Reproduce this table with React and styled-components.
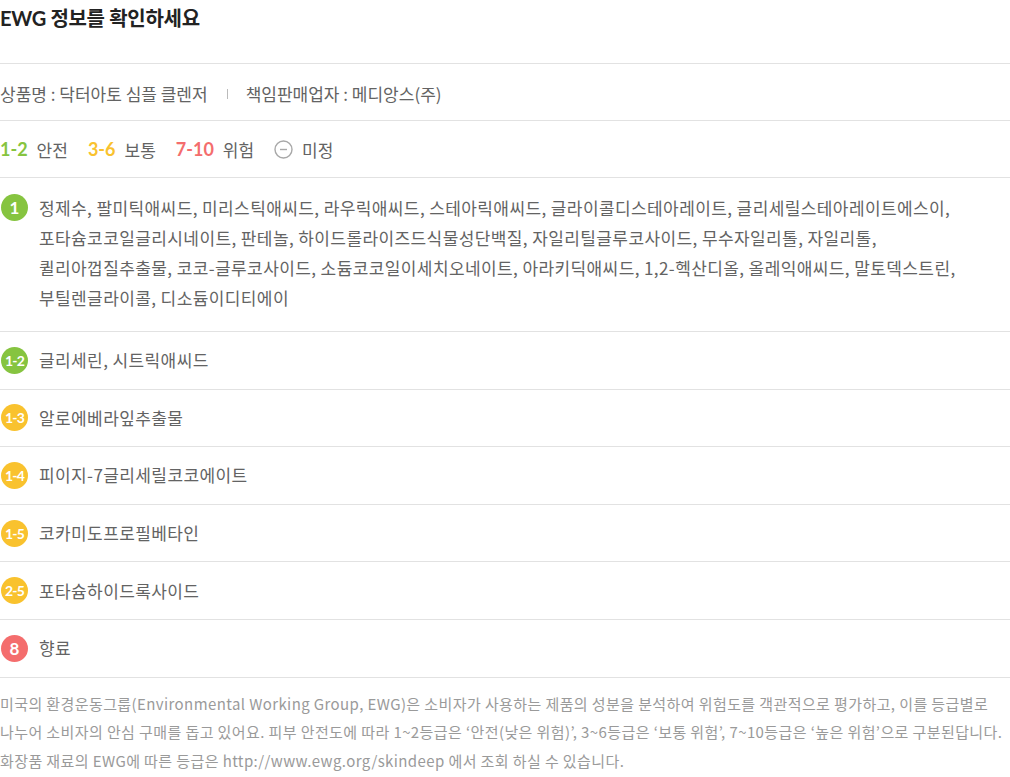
import styled, { createGlobalStyle } from 'styled-components';

const GlobalStyle = createGlobalStyle`
  body {
    margin: 0;
    background: #fff;
    font-family: "Noto Sans CJK KR", "Noto Sans", sans-serif;
  }
`;

const COLORS = {
  green: '#86c440',
  yellow: '#f9c22e',
  red: '#f46d6d',
};

const ingredients = [
  {
    grade: '1',
    color: 'green',
    lines: [
      '정제수, 팔미틱애씨드, 미리스틱애씨드, 라우릭애씨드, 스테아릭애씨드, 글라이콜디스테아레이트, 글리세릴스테아레이트에스이,',
      '포타슘코코일글리시네이트, 판테놀, 하이드롤라이즈드식물성단백질, 자일리틸글루코사이드, 무수자일리톨, 자일리톨,',
      '퀼리아껍질추출물, 코코-글루코사이드, 소듐코코일이세치오네이트, 아라키딕애씨드, 1,2-헥산디올, 올레익애씨드, 말토덱스트린,',
      '부틸렌글라이콜, 디소듐이디티에이'
    ]
  },
  { grade: '1-2', color: 'green', lines: ['글리세린, 시트릭애씨드'] },
  { grade: '1-3', color: 'yellow', lines: ['알로에베라잎추출물'] },
  { grade: '1-4', color: 'yellow', lines: ['피이지-7글리세릴코코에이트'] },
  { grade: '1-5', color: 'yellow', lines: ['코카미도프로필베타인'] },
  { grade: '2-5', color: 'yellow', lines: ['포타슘하이드록사이드'] },
  { grade: '8', color: 'red', lines: ['향료'] }
];

const App = () => {
  return (
    <>
      <GlobalStyle />
      <Wrapper>
        <Title>EWG 정보를 확인하세요</Title>

        <ProductRow>
          <span>상품명 : 닥터아토 심플 클렌저</span>
          <Separator />
          <span>책임판매업자 : 메디앙스(주)</span>
        </ProductRow>

        <LegendRow>
          <LegendItem>
            <LegendGrade color={COLORS.green}>1-2</LegendGrade>안전
          </LegendItem>
          <LegendItem>
            <LegendGrade color={COLORS.yellow}>3-6</LegendGrade>보통
          </LegendItem>
          <LegendItem>
            <LegendGrade color={COLORS.red}>7-10</LegendGrade>위험
          </LegendItem>
          <LegendItem>
            <svg width="19" height="19" viewBox="0 0 19 19">
              <circle cx="9.5" cy="9.5" r="8.5" fill="none" stroke="#a8a8a8" strokeWidth="1.4" />
              <line x1="6" y1="9.5" x2="13" y2="9.5" stroke="#a8a8a8" strokeWidth="1.4" />
            </svg>
            미정
          </LegendItem>
        </LegendRow>

        {ingredients.map((item, i) => (
          <IngredientRow key={i} multi={item.lines.length > 1}>
            <Badge color={COLORS[item.color]} small={item.grade.length > 1}>
              {item.grade}
            </Badge>
            <IngredientText>
              {item.lines.map((line, j) => (
                <div key={j}>{line}</div>
              ))}
            </IngredientText>
          </IngredientRow>
        ))}

        <Footer>
          미국의 환경운동그룹(Environmental Working Group, EWG)은 소비자가 사용하는 제품의 성분을 분석하여 위험도를 객관적으로 평가하고, 이를 등급별로
          <br />
          나누어 소비자의 안심 구매를 돕고 있어요. 피부 안전도에 따라 1~2등급은 ‘안전(낮은 위험)’, 3~6등급은 ‘보통 위험’, 7~10등급은 ‘높은 위험’으로 구분된답니다.
          <br />
          화장품 재료의 EWG에 따른 등급은 http://www.ewg.org/skindeep 에서 조회 하실 수 있습니다.
        </Footer>
      </Wrapper>
    </>
  );
};

const Wrapper = styled.div`
  width: 1010px;
  color: #636363;
`;

const Title = styled.h2`
  margin: 0;
  height: 63px;
  line-height: 36px;
  font-family: "Lato", "Noto Sans CJK KR", sans-serif;
  font-size: 20px;
  font-weight: 700;
  color: #222;
  letter-spacing: -0.3px;
  border-bottom: 1px solid #e2e2e2;
`;

const ProductRow = styled.div`
  display: flex;
  align-items: center;
  height: 57px;
  font-size: 17px;
  color: #636363;
  border-bottom: 1px solid #e2e2e2;
  padding-top: 3px;
  box-sizing: border-box;
`;

const Separator = styled.i`
  display: inline-block;
  width: 1px;
  height: 10px;
  background: #bbb;
  margin: 0 18px 0 19px;
`;

const LegendRow = styled.div`
  display: flex;
  align-items: center;
  gap: 20px;
  height: 56px;
  font-size: 17px;
  color: #636363;
  border-bottom: 1px solid #e2e2e2;
`;

const LegendItem = styled.span`
  display: inline-flex;
  align-items: center;
  gap: 9px;
`;

const LegendGrade = styled.b`
  font-family: "Lato", sans-serif;
  font-weight: 700;
  font-size: 18px;
  color: ${props => props.color};
`;

const IngredientRow = styled.div`
  display: flex;
  align-items: ${props => (props.multi ? 'flex-start' : 'center')};
  gap: 11px;
  padding: ${props => (props.multi ? '15px 0 18px 1px' : '0 0 0 1px')};
  min-height: 57.6px;
  box-sizing: border-box;
  border-bottom: 1px solid #e2e2e2;
`;

const Badge = styled.span`
  flex: none;
  display: flex;
  align-items: center;
  justify-content: center;
  width: 27px;
  height: 27px;
  margin-top: ${props => (props.small ? '0' : '1px')};
  border-radius: 50%;
  background: ${props => props.color};
  color: #fff;
  font-family: "Lato", sans-serif;
  font-weight: 700;
  font-size: ${props => (props.small ? '14px' : '17px')};
  letter-spacing: ${props => (props.small ? '-0.9px' : '0')};
`;

const IngredientText = styled.div`
  font-size: 17px;
  line-height: 30px;
  color: #636363;
  letter-spacing: 0.4px;
`;

const Footer = styled.p`
  margin: 0;
  padding-top: 12px;
  font-size: 15px;
  line-height: 28.5px;
  color: #9a9a9a;
  letter-spacing: 0.4px;
  white-space: nowrap;
`;

export default App;
